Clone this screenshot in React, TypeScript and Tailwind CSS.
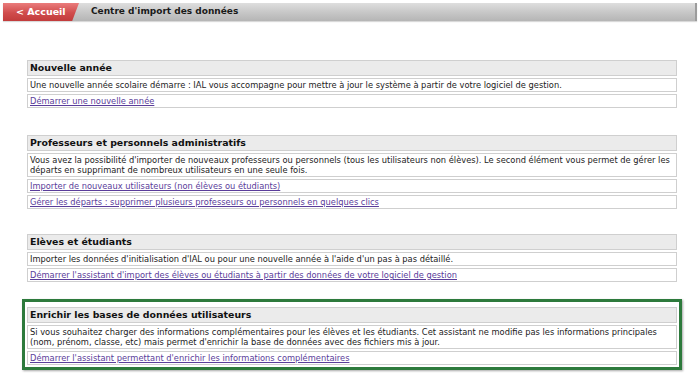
import React from 'react';

interface Section {
  title: string;
  body: React.ReactNode;
  links: string[];
  highlight?: boolean;
  spacing: string;
}

const sections: Section[] = [
  {
    title: 'Nouvelle année',
    body: 'Une nouvelle année scolaire démarre : IAL vous accompagne pour mettre à jour le système à partir de votre logiciel de gestion.',
    links: ['Démarrer une nouvelle année'],
    spacing: 'mt-0',
  },
  {
    title: 'Professeurs et personnels administratifs',
    body: (
      <>
        Vous avez la possibilité d'importer de nouveaux professeurs ou personnels (tous les utilisateurs non élèves). Le second élément vous permet de gérer les
        <br />
        départs en supprimant de nombreux utilisateurs en une seule fois.
      </>
    ),
    links: [
      'Importer de nouveaux utilisateurs (non élèves ou étudiants)',
      'Gérer les départs : supprimer plusieurs professeurs ou personnels en quelques clics',
    ],
    spacing: 'mt-[21px]',
  },
  {
    title: 'Elèves et étudiants',
    body: "Importer les données d'initialisation d'IAL ou pour une nouvelle année à l'aide d'un pas à pas détaillé.",
    links: ["Démarrer l'assistant d'import des élèves ou étudiants à partir des données de votre logiciel de gestion"],
    spacing: 'mt-[19px]',
  },
  {
    title: 'Enrichir les bases de données utilisateurs',
    body: (
      <>
        Si vous souhaitez charger des informations complémentaires pour les élèves et les étudiants. Cet assistant ne modifie pas les informations principales
        <br />
        (nom, prénom, classe, etc) mais permet d'enrichir la base de données avec des fichiers mis à jour.
      </>
    ),
    links: ["Démarrer l'assistant permettant d'enrichir les informations complémentaires"],
    highlight: true,
    spacing: 'mt-[14px]',
  },
];

const ImportSection: React.FC<{ section: Section }> = ({ section }) => (
  <div
    className={`${section.spacing} border-[3px] px-[2px] ${
      section.highlight ? 'border-[#2d7a3c] pt-[5px] pb-[2px] shadow-[1px_1px_2px_rgba(0,0,0,0.35)]' : 'border-transparent'
    }`}
  >
    <div className="flex flex-col gap-[2px]">
      <div className="border border-[#cfcfcf] bg-[#ebebeb] px-[2px] h-[16px] flex items-center text-[9.4px] font-bold text-[#111] leading-none">
        {section.title}
      </div>
      <div className="border border-[#cfcfcf] bg-white px-[2px] py-[1px] text-[8.3px] leading-[10px] text-[#222] whitespace-nowrap">
        {section.body}
      </div>
      {section.links.map(link => (
        <div key={link} className="border border-[#cfcfcf] bg-white px-[2px] py-[1px] text-[8.3px] leading-[10px]">
          <a href="#" className="text-[#5a3d9a] underline">
            {link}
          </a>
        </div>
      ))}
    </div>
  </div>
);

export default function App() {
  return (
    <div className="w-[700px] h-[374px] bg-white overflow-hidden font-['DejaVu_Sans',Verdana,sans-serif]">
      <header className="mx-[3px] mt-[3px] h-[18px] flex items-stretch bg-[linear-gradient(to_bottom,#dedede,#c6c6c6_55%,#b5b5b5)] border-r-2 border-[#9c9c9c] shadow-[0_1px_1px_rgba(0,0,0,0.15)]">
        <div className="w-[76px] flex items-center pl-[13px] bg-[linear-gradient(to_bottom,#ea7c7c,#d04c4c_55%,#c23b3b)] [clip-path:polygon(0_0,100%_0,91%_100%,0_100%)] text-white text-[9.5px] font-bold">
          &lt; Accueil
        </div>
        <div className="flex items-center pl-[12px] text-[9px] font-bold text-[#1a1a1a]">
          Centre d'import des données
        </div>
      </header>

      <main className="ml-[22px] w-[660px] mt-[36px] flex flex-col">
        {sections.map(s => (
          <ImportSection key={s.title} section={s} />
        ))}
      </main>
    </div>
  );
}
